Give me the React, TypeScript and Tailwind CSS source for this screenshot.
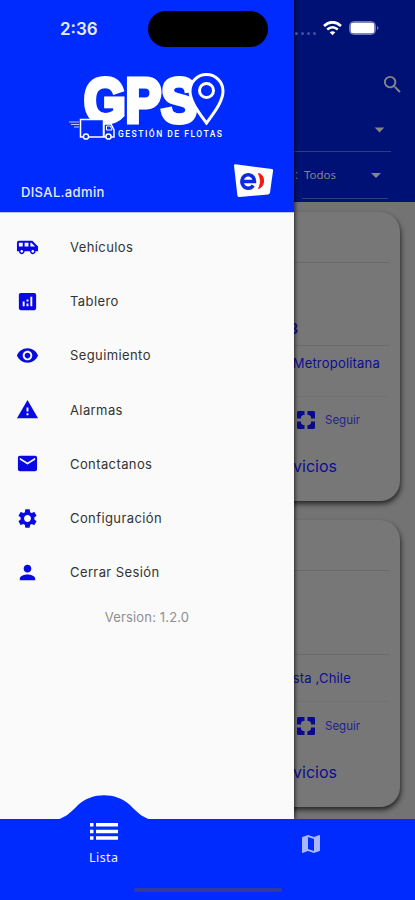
import {
  MdAirportShuttle,
  MdAnalytics,
  MdArrowDropDown,
  MdEmail,
  MdMap,
  MdPerson,
  MdSearch,
  MdSettings,
  MdVisibility,
  MdWarning,
} from "react-icons/md";

const menuItems = [
  { label: "Vehículos", icon: MdAirportShuttle },
  { label: "Tablero", icon: MdAnalytics },
  { label: "Seguimiento", icon: MdVisibility },
  { label: "Alarmas", icon: MdWarning },
  { label: "Contactanos", icon: MdEmail },
  { label: "Configuración", icon: MdSettings },
  { label: "Cerrar Sesión", icon: MdPerson },
];

function GpsLogo() {
  return (
    <svg width="160" height="76" viewBox="0 0 160 76" fill="none">
      <text
        x="15"
        y="54.500"
        textLength="113"
        lengthAdjust="spacingAndGlyphs"
        fill="#fff"
        stroke="#fff"
        strokeWidth="5"
        fontFamily="Liberation Sans, sans-serif"
        fontWeight="700"
        fontSize="63"
      >
        GPS
      </text>
      {/* Location pin */}
      <path
        d="M137.500 56C131 47 121 35 121 24a16.500 16.500 0 0 1 33 0C154 35 144 47 137.500 56Z"
        fill="#002bff"
        stroke="#fff"
        strokeWidth="3"
      />
      <circle cx="137.500" cy="23.500" r="7" stroke="#fff" strokeWidth="3" />
      {/* Truck */}
      <path d="M11.500 52.500h23v17.500h-23zM35 57h7l3 6v7H35z" fill="#002bff" stroke="#fff" strokeWidth="1.500" />
      <path d="M37.500 59h4l1.500 4h-5.500z" stroke="#fff" />
      <circle cx="17" cy="69.500" r="2.600" fill="#002bff" stroke="#fff" strokeWidth="1.500" />
      <circle cx="39.500" cy="69.500" r="2.600" fill="#002bff" stroke="#fff" strokeWidth="1.500" />
      <path d="M0 55h10M2 57.500h8M5 60h5" stroke="#fff" strokeOpacity=".75" />
      <text
        x="49"
        y="70"
        textLength="104"
        fill="#fff"
        fontFamily="Roboto, sans-serif"
        fontWeight="500"
        fontSize="8.500"
      >
        GESTIÓN DE FLOTAS
      </text>
    </svg>
  );
}

function CompanyBadge() {
  return (
    <svg width="41" height="34" viewBox="0 0 41 34">
      <path d="M1 1.500Q1 0 2.500.2L39 5q1.300.2 1.100 1.600L37 28.500q-.2 1.700-1.900 1.900L6.500 33q-1.900.2-2.100-1.600Z" fill="#fff" />
      <path d="M10 17.500H21.500A6.300 6.800 0 1 0 20.300 21.500" fill="none" stroke="#0a2be0" strokeWidth="3.500" />
      <path d="M25.500 9.500C32.300 10.500 32.300 23 25.500 24.500C28 20 28 15 25.500 9.500Z" fill="#fa1414" stroke="#fa1414" />
    </svg>
  );
}

function FollowIcon() {
  return (
    <svg width="18" height="18" viewBox="0 0 18 18" fill="#0a0a8c">
      <path d="M1 0h6.500v4H5.500L5 5 4 5.500v2H0V1z" />
      <path d="M17 0h-6.500v4h2L13 5l1 .5v2H18V1z" />
      <path d="M1 18h6.500v-4H5.500L5 13l-1-.5v-2H0V17z" />
      <path d="M17 18h-6.500v-4h2l.5-1 1-.5v-2H18V17z" />
    </svg>
  );
}

function ListIcon() {
  return (
    <svg width="28" height="17" viewBox="0 0 28 17" fill="#fff">
      <path d="M0 0h3.500v3.500H0zM6 0h22v3.500H6zM0 6.700h3.500v3.500H0zM6 6.700h22v3.500H6zM0 13.200h3.500v3.500H0zM6 13.200h22v3.500H6z" />
    </svg>
  );
}

function StatusBar() {
  return (
    <div className="absolute inset-x-0 top-0 z-30 h-[58px]">
      <span className="absolute left-[60px] top-[17px] font-['Inter'] text-[17px] leading-6 font-semibold text-[#e8ebff]">
        2:36
      </span>
      <div className="absolute left-[148px] top-[11px] h-9 w-[120px] rounded-full bg-black" />
      <div className="absolute left-[295px] top-[32px] flex gap-[3px]">
        <i className="size-[3px] rounded-full bg-[#4050a8]" />
        <i className="size-[3px] rounded-full bg-[#4050a8]" />
        <i className="size-[3px] rounded-full bg-[#4050a8]" />
        <i className="size-[3px] rounded-full bg-[#4050a8]" />
      </div>
      <svg className="absolute left-[323px] top-[21px]" width="19" height="15" viewBox="0 0 19 15" fill="none" stroke="#fff">
        <path d="M1 5Q9.500-2.500 18 5" strokeWidth="2.800" />
        <path d="M4.200 8.500q5.300-4.500 10.600 0" strokeWidth="2.600" />
        <path d="M9.500 14.300 6.700 11.300q2.800-2.200 5.600 0z" fill="#fff" stroke="none" />
      </svg>
      <svg className="absolute left-[349px] top-[21px]" width="31" height="15" viewBox="0 0 31 15">
        <rect x=".5" y=".5" width="26" height="13" rx="4" fill="none" stroke="#7079b8" />
        <rect x="1.500" y="1.500" width="24" height="11" rx="3" fill="#fff" />
        <path d="M28 5q3 2 0 4z" fill="#7079b8" />
      </svg>
    </div>
  );
}

function FleetHeader() {
  return (
    <header className="flex h-[202px] shrink-0 flex-col items-end bg-[#001175] pt-[73px] text-[#858585]">
      <MdSearch size={23} className="mr-[11px]" />
      <div className="mt-[22px] mr-6 flex h-[34px] w-[290px] items-start justify-end border-b border-[#303d80]">
        <MdArrowDropDown size={23} />
      </div>
      <div className="mr-[25px] flex h-[46px] w-[290px] items-center justify-end pr-[2px] text-xs">
        <span className="mr-[6px]">:</span>
        <span className="w-[60px] font-['Noto_Sans'] text-[11.500px]">Todos</span>
        <MdArrowDropDown size={24} />
      </div>
      <div className="mr-[27px] h-px w-[86px] bg-[#303d80]" />
    </header>
  );
}

type CardProps = { plate?: string; place: string; first?: boolean };

function VehicleCard({ plate, place, first }: CardProps) {
  return (
    <article
      className={`mx-[15px] flex shrink-0 flex-col rounded-[20px] bg-[#777] px-[11px] text-[#0d0d94] shadow-[1px_3px_5px_rgba(0,0,0,0.650)] ${
        first ? "h-[289px]" : "h-[287px]"
      }`}
    >
      <div className="h-[51px] border-b border-[#696969]" />
      <div
        className={`flex items-end justify-end border-b border-[#6b6b6b] pb-[5px] text-[15px] font-bold ${
          first ? "h-[83px] pr-[91px]" : "h-[84px]"
        }`}
      >
        {plate}
      </div>
      <div
        className={`border-b border-[#717171] text-right font-['Inter'] text-[13px] tracking-[0.200px] ${
          first ? "h-[51px] pt-[8px] pr-[9px]" : "h-[47px] pt-[14px] pr-[38px]"
        }`}
      >
        {place}
      </div>
      <div className={`mt-3 flex items-center justify-end pr-[26px] font-['Inter'] text-[11.500px] ${first ? "h-[22px]" : "h-[24px]"}`}>
        <FollowIcon />
        <span className="mt-[2px] ml-[10px] w-[38px] opacity-80">Seguir</span>
      </div>
      <div className={`pr-[52px] text-right font-['Inter'] text-[16px] leading-6 ${first ? "mt-[23px]" : "mt-[22px]"}`}>Servicios</div>
    </article>
  );
}

function Drawer() {
  return (
    <aside className="absolute top-0 left-0 z-10 flex h-[819px] w-[294px] flex-col bg-[#fafafa] shadow-[1px_0_4px_rgba(0,0,0,0.700)]">
      <div className="flex h-[213px] shrink-0 flex-col border-b border-[#bcc4f8] bg-[#002bff] pt-[67px]">
        <div className="ml-[69px]">
          <GpsLogo />
        </div>
        <div className="mt-[21px] flex justify-between pr-[20px] pl-[21px]">
          <span className="mt-[18px] font-['Inter'] text-[13px] leading-5 font-medium tracking-[0.350px] text-[#e6eaff]">DISAL.admin</span>
          <CompanyBadge />
        </div>
      </div>
      <nav className="flex flex-col pt-[8px]">
        {menuItems.map(({ label, icon: Icon }) => (
          <a key={label} className="flex h-[54.100px] items-center pl-4">
            <Icon size={23} className="-mt-px shrink-0 text-[#0808e4]" />
            <span className="ml-[31px] font-['Inter'] text-[13px] tracking-[0.400px] text-[#333]">{label}</span>
          </a>
        ))}
      </nav>
      <p className="mt-[8px] text-center font-['Inter'] text-[13px] tracking-[0.150px] text-[#8f8f8f]">Version: 1.2.0</p>
    </aside>
  );
}

function BottomNav() {
  return (
    <nav className="relative z-20 flex h-[81px] shrink-0 bg-[#002bff]">
      <svg className="absolute -top-[24.500px] left-[52px]" width="104" height="26" viewBox="0 0 104 26" fill="#002bff">
        <path d="M0 25C12 25 19 17 26 10 40-3 64-3 78 10 85 17 92 25 104 25v1H0z" />
      </svg>
      <div className="relative flex w-1/2 flex-col items-center pt-[4px] text-[#eef0ff]">
        <ListIcon />
        <span className="mt-[10px] font-['Noto_Sans'] text-[12.500px] leading-4 tracking-[0.400px]">Lista</span>
      </div>
      <div className="flex w-1/2 justify-center pt-[13px] text-[#a8b5ff]">
        <MdMap size={24} />
      </div>
      <div className="absolute top-[69px] left-[134px] h-[4px] w-[148px] rounded-full bg-[#303ba0]" />
    </nav>
  );
}

export default function App() {
  return (
    <div className="relative flex h-[900px] w-[415px] flex-col overflow-hidden font-['Roboto',sans-serif]">
      <StatusBar />
      <FleetHeader />
      <main className="flex min-h-0 flex-1 flex-col gap-[19px] overflow-hidden bg-[#737373] pt-[10px]">
        <VehicleCard plate="GPS-03" place="Región Metropolitana" first />
        <VehicleCard place="Antofagasta ,Chile" />
      </main>
      <BottomNav />
      <Drawer />
    </div>
  );
}
